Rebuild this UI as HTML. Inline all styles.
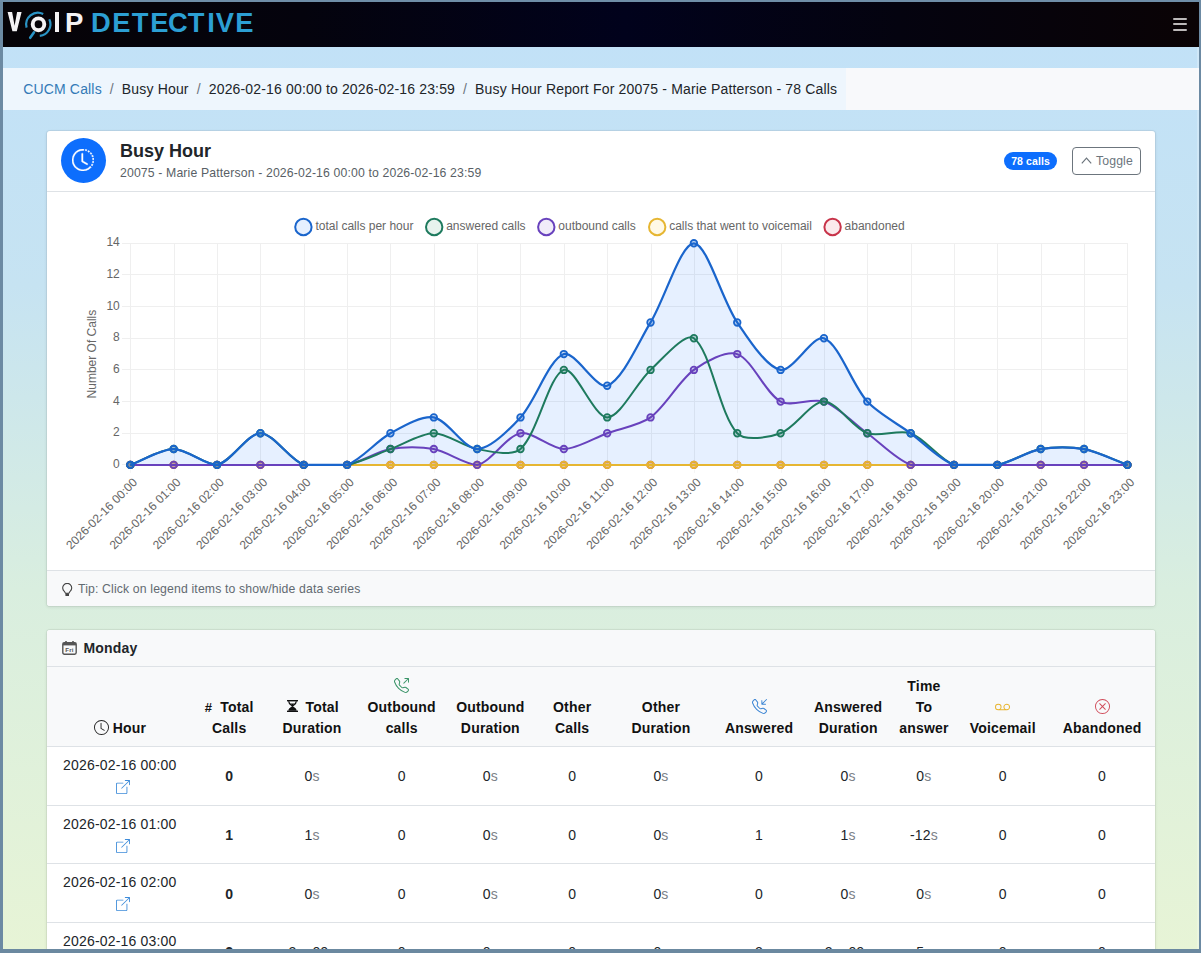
<!DOCTYPE html>
<html><head><meta charset="utf-8"><title>Busy Hour</title>
<style>
*{box-sizing:border-box}
html,body{margin:0;padding:0}
body{width:1201px;height:953px;position:relative;overflow:hidden;background:#6c8aa3;font-family:"Liberation Sans",sans-serif;color:#212529}
.abs{position:absolute}
#vp{left:3px;top:2px;width:1196px;height:947px;background:linear-gradient(180deg,#c1e1f8 0%,#c6e3f2 30%,#d9eedf 62%,#e7f4d6 100%);overflow:hidden}
#nav{left:3px;top:2px;width:1196px;height:45px;background:linear-gradient(90deg,#060307 0%,#04030d 25%,#01021c 52%,#04030f 75%,#0a0305 100%)}
#logo{left:0;top:0}
.lg{position:absolute;font-weight:700;font-size:27.5px;line-height:27px;top:6.5px;color:#f4f2f4}
.det{color:#2c9fd4;font-size:27.3px}
.bl{left:1170.3px;width:13.5px;height:2px;background:#bcb9b9;border-radius:1px}
#bc{left:3px;top:68px;width:1196px;height:42px;background:#f8f9fb}
#bcin{left:3px;top:68px;width:843px;height:42px;background:#eef6fd;font-size:14px;letter-spacing:0.16px;line-height:43px;padding-left:20.2px;white-space:nowrap}
#bcin a{color:#337ab7;text-decoration:none}
#bcin .sep{color:#6c757d;padding:0 8px}
.card{position:absolute;left:46px;width:1110px;background:#fff;border:1px solid rgba(0,0,0,0.05);background-clip:padding-box;border-radius:4px;box-shadow:0 1px 3px rgba(0,0,0,.06);overflow:hidden}
#c1{top:130px;height:477px}
#c1h{left:0;top:0;width:1108px;height:61px;border-bottom:1px solid #dee2e6}
#ic{left:13.5px;top:6.5px;width:45px;height:45px;border-radius:50%;background:#0d6efd}
#t1{left:73px;top:10px;font-size:18px;font-weight:700;line-height:20px;color:#212529}
#t2{left:73px;top:33.8px;font-size:12.25px;letter-spacing:0.14px;color:#595f66;line-height:16px;white-space:nowrap}
#badge{left:957px;top:21px;width:53px;height:18px;border-radius:9px;background:#0d6efd;color:#fff;font-size:10.5px;font-weight:700;line-height:18px;text-align:center;letter-spacing:0.1px}
#tog{left:1025px;top:15.6px;width:69px;height:28px;border:1px solid #6c757d;border-radius:4px;color:#6c757d;font-size:12.25px;line-height:26px;padding-left:23px;letter-spacing:0.14px}
#tog svg{position:absolute;left:8px;top:9px}
#c1f{left:0;top:439px;width:1108px;height:37px;background:#f8f9fa;border-top:1px solid #dee2e6;font-size:12.25px;color:#626a71;letter-spacing:0.14px;line-height:36px;padding-left:31px}
#c1f svg{position:absolute;left:14.8px;top:11.5px}
.chart{position:absolute;left:0;top:0}
#c2{top:629px;height:400px;border-bottom:none}
#c2h{left:0;top:0;width:1108px;height:37px;background:#f8f9fa;border-bottom:1px solid #dee2e6;font-weight:700;font-size:14px;letter-spacing:0.18px;line-height:36px;padding-left:36.5px}
#c2h svg{position:absolute;left:14.5px;top:11px}
table{position:absolute;left:0;top:37px;width:1108px;border-collapse:collapse;table-layout:fixed;font-size:14px;letter-spacing:0.18px}
th{background:#f8f9fa;font-weight:700;vertical-align:bottom;padding:9px 2px 7px;line-height:21px;text-align:center;border-bottom:1px solid #dee2e6;color:#111}
th svg{vertical-align:-2px}
td{text-align:center;vertical-align:middle;padding:9px 2px 7px;line-height:20.85px;border-bottom:1px solid #dee2e6;color:#212529}
td.hr{padding:8px 2px}
td b{font-weight:700}
.sfx{color:#7c8288}
.ext svg{vertical-align:-3px}
</style></head><body>
<div id="vp" class="abs"></div>
<div id="nav" class="abs">
  <svg class="abs" style="left:0;top:0" width="30" height="45" viewBox="0 0 30 45"><polygon points="4.6,10 9.1,10 11.6,23.8 14.1,10 18.6,10 13.8,29.2 9.4,29.2" fill="#f4f2f4"/></svg>
  <svg class="abs" style="left:0;top:0" width="70" height="45" viewBox="0 0 70 45">
    <ellipse cx="35.5" cy="22.3" rx="5.8" ry="5.9" fill="none" stroke="#f4f2f4" stroke-width="3.9"/>
    <path d="M40.2 11.9 A11.8 11.8 0 0 0 23.6 25.6" fill="none" stroke="#2a93c4" stroke-width="2.2"/>
    <path d="M46.3 17.2 A11.8 11.8 0 0 1 36.8 33.9" fill="none" stroke="#2a93c4" stroke-width="2.2"/>
    <path d="M30.9 30.4 L27.2 35.8" fill="none" stroke="#2a93c4" stroke-width="2.6" stroke-linecap="round"/>
  </svg>
  <div class="abs" style="left:52px;top:10px;width:3.8px;height:19.5px;background:#f4f2f4"></div>
  <div class="lg" style="left:62px">P</div>
  <div class="lg det" style="left:88.0px">D</div><div class="lg det" style="left:109.2px">E</div><div class="lg det" style="left:128.7px">T</div><div class="lg det" style="left:147.2px">E</div><div class="lg det" style="left:164.9px">C</div><div class="lg det" style="left:184.7px">T</div><div class="lg det" style="left:204.2px">I</div><div class="lg det" style="left:212.8px">V</div><div class="lg det" style="left:232.2px">E</div>
  <div class="abs bl" style="top:15.9px"></div><div class="abs bl" style="top:21.4px"></div><div class="abs bl" style="top:26.9px"></div>
</div>
<div id="bc" class="abs"></div>
<div id="bcin" class="abs"><a>CUCM Calls</a><span class="sep">/</span>Busy Hour<span class="sep">/</span>2026-02-16 00:00 to 2026-02-16 23:59<span class="sep">/</span>Busy Hour Report For 20075 - Marie Patterson - 78 Calls</div>

<div id="c1" class="card">
  <div id="c1h" class="abs">
    <div id="ic" class="abs">
      <svg class="abs" style="left:11.5px;top:11.5px" width="22" height="22" viewBox="0 0 16 16" fill="#fff" stroke="#fff" stroke-width="0.3"><path d="M8.515 1.019A7 7 0 0 0 8 1V0a8 8 0 0 1 .589.022zm2.004.45a7 7 0 0 0-.985-.299l.219-.976q.576.129 1.126.342zm1.37.71a7 7 0 0 0-.439-.27l.493-.87a8 8 0 0 1 .979.654l-.615.789a7 7 0 0 0-.418-.302zm1.834 1.79a7 7 0 0 0-.653-.796l.724-.69q.406.429.747.91zm.744 1.352a7 7 0 0 0-.214-.468l.893-.45a8 8 0 0 1 .45 1.088l-.95.313a7 7 0 0 0-.179-.483m.53 2.507a7 7 0 0 0-.1-1.025l.985-.17q.1.58.116 1.17zm-.131 1.538q.05-.254.081-.51l.993.123a8 8 0 0 1-.23 1.155l-.964-.267q.069-.247.12-.501m-.952 2.379q.276-.436.486-.908l.914.405q-.24.54-.555 1.038zm-.964 1.205q.183-.183.35-.378l.758.653a8 8 0 0 1-.401.432z"/><path d="M8 1a7 7 0 1 0 4.95 11.95l.707.707A8.001 8.001 0 1 1 8 0z"/><path d="M7.5 3a.5.5 0 0 1 .5.5v5.21l3.248 1.856a.5.5 0 0 1-.496.868l-3.5-2A.5.5 0 0 1 7 9V3.5a.5.5 0 0 1 .5-.5"/></svg>
    </div>
    <div id="t1" class="abs">Busy Hour</div>
    <div id="t2" class="abs">20075 - Marie Patterson - 2026-02-16 00:00 to 2026-02-16 23:59</div>
    <div id="badge" class="abs">78 calls</div>
    <div id="tog" class="abs"><svg width="11" height="7" viewBox="0 0 11 7"><path d="M0.8 6.3 L5.5 1.2 L10.2 6.3" fill="none" stroke="#6c757d" stroke-width="1.2"/></svg>Toggle</div>
  </div>
  <div id="c1f" class="abs"><svg width="11" height="14" viewBox="0 0 11 14"><path d="M3.5 10.3 L2.3 8.3 A4.5 4.5 0 1 1 8.1 8.3 L6.9 10.3 Z" fill="none" stroke="#444" stroke-width="1.1" stroke-linejoin="round"/><rect x="3.4" y="10.2" width="3.6" height="2.8" rx="0.6" fill="#444"/></svg>Tip: Click on legend items to show/hide data series</div>
</div>

<div id="c2" class="card">
  <div id="c2h" class="abs"><svg width="15" height="14" viewBox="0 0 15 14"><rect x="0.8" y="1.8" width="13.4" height="11.4" rx="1.6" fill="none" stroke="#555" stroke-width="1.4"/><rect x="0.8" y="1.8" width="13.4" height="2.6" fill="#555"/><rect x="3.2" y="0" width="1.6" height="2.5" fill="#555"/><rect x="10.2" y="0" width="1.6" height="2.5" fill="#555"/><text x="7.5" y="10.8" font-family="Liberation Sans" font-size="6.2" font-weight="700" fill="#555" text-anchor="middle">Fri</text></svg>Monday</div>
  <table>
    <colgroup><col style="width:145.6px"><col style="width:73.2px"><col style="width:92.6px"><col style="width:86.6px"><col style="width:90.8px"><col style="width:72.8px"><col style="width:104.8px"><col style="width:91.4px"><col style="width:86.8px"><col style="width:64.8px"><col style="width:92.8px"><col style="width:105.8px"></colgroup>
    <thead><tr>
      <th><svg width="15" height="15" viewBox="0 0 16 16" fill="#222"><path d="M8 3.5a.5.5 0 0 0-1 0V9a.5.5 0 0 0 .252.434l3.5 2a.5.5 0 0 0 .496-.868L8 8.71z"/><path d="M8 16A8 8 0 1 0 8 0a8 8 0 0 0 0 16m7-8A7 7 0 1 1 1 8a7 7 0 0 1 14 0"/></svg> Hour</th>
      <th><span style="font-size:13px">#</span>&nbsp; Total<br>Calls</th>
      <th><svg width="11" height="12" viewBox="0 0 11 12" style="margin-left:2px;margin-right:3px;vertical-align:0px"><rect x="0" y="0" width="11" height="1.4" fill="#111"/><rect x="0" y="10.6" width="11" height="1.4" fill="#111"/><path d="M1.7 1.3 C1.7 4 4.6 5 5.5 6 C6.4 5 9.3 4 9.3 1.3" fill="none" stroke="#111" stroke-width="1.3"/><path d="M3.6 3.6 H7.4 C6.8 4.4 5.9 4.9 5.5 5.4 C5.1 4.9 4.2 4.4 3.6 3.6 Z" fill="#111"/><path d="M1.4 10.7 C1.4 8 4.5 7 5.5 6 C6.5 7 9.6 8 9.6 10.7 Z" fill="#111"/></svg> Total<br>Duration</th>
      <th><svg width="15" height="15" viewBox="0 0 16 16" fill="#3a9468"><path d="M3.654 1.328a.678.678 0 0 0-1.015-.063L1.605 2.3c-.483.484-.661 1.169-.45 1.77a17.6 17.6 0 0 0 4.168 6.608 17.6 17.6 0 0 0 6.608 4.168c.601.211 1.286.033 1.77-.45l1.034-1.034a.678.678 0 0 0-.063-1.015l-2.307-1.794a.68.68 0 0 0-.58-.122l-2.19.547a1.75 1.75 0 0 1-1.657-.459L5.482 8.062a1.75 1.75 0 0 1-.46-1.657l.548-2.19a.68.68 0 0 0-.122-.58zM1.884.511a1.745 1.745 0 0 1 2.612.163L6.29 2.98c.329.423.445.974.315 1.494l-.547 2.19a.68.68 0 0 0 .178.643l2.457 2.457a.68.68 0 0 0 .644.178l2.189-.547a1.75 1.75 0 0 1 1.494.315l2.306 1.794c.829.645.905 1.87.163 2.611l-1.034 1.034c-.74.74-1.846 1.065-2.877.702a18.6 18.6 0 0 1-7.01-4.42 18.6 18.6 0 0 1-4.42-7.009c-.362-1.03-.037-2.137.703-2.877zM11 .5a.5.5 0 0 1 .5-.5h4a.5.5 0 0 1 .5.5v4a.5.5 0 0 1-1 0V1.707l-4.146 4.147a.5.5 0 0 1-.708-.708L14.293 1H11.5a.5.5 0 0 1-.5-.5"/></svg><br>Outbound<br>calls</th>
      <th>Outbound<br>Duration</th>
      <th>Other<br>Calls</th>
      <th>Other<br>Duration</th>
      <th><svg width="15" height="15" viewBox="0 0 16 16" fill="#3d86d4"><path d="M3.654 1.328a.678.678 0 0 0-1.015-.063L1.605 2.3c-.483.484-.661 1.169-.45 1.77a17.6 17.6 0 0 0 4.168 6.608 17.6 17.6 0 0 0 6.608 4.168c.601.211 1.286.033 1.77-.45l1.034-1.034a.678.678 0 0 0-.063-1.015l-2.307-1.794a.68.68 0 0 0-.58-.122l-2.19.547a1.75 1.75 0 0 1-1.657-.459L5.482 8.062a1.75 1.75 0 0 1-.46-1.657l.548-2.19a.68.68 0 0 0-.122-.58zM1.884.511a1.745 1.745 0 0 1 2.612.163L6.29 2.98c.329.423.445.974.315 1.494l-.547 2.19a.68.68 0 0 0 .178.643l2.457 2.457a.68.68 0 0 0 .644.178l2.189-.547a1.75 1.75 0 0 1 1.494.315l2.306 1.794c.829.645.905 1.87.163 2.611l-1.034 1.034c-.74.74-1.846 1.065-2.877.702a18.6 18.6 0 0 1-7.01-4.42 18.6 18.6 0 0 1-4.42-7.009c-.362-1.03-.037-2.137.703-2.877zM15.854.146a.5.5 0 0 1 0 .708L11.707 5H14.5a.5.5 0 0 1 0 1h-4a.5.5 0 0 1-.5-.5v-4a.5.5 0 0 1 1 0v2.793L15.146.146a.5.5 0 0 1 .708 0"/></svg><br>Answered</th>
      <th>Answered<br>Duration</th>
      <th>Time<br>To<br>answer</th>
      <th><svg width="15" height="15" viewBox="0 0 16 16" fill="#e8b530"><path d="M7 8.5A3.5 3.5 0 0 1 5.959 11H10.04A3.5 3.5 0 1 1 12.5 12h-9a3.5 3.5 0 1 1 3.5-3.5m-6 0a2.5 2.5 0 1 0 5 0 2.5 2.5 0 0 0-5 0m14 0a2.5 2.5 0 1 0-5 0 2.5 2.5 0 0 0 5 0"/></svg><br>Voicemail</th>
      <th><svg width="15" height="15" viewBox="0 0 16 16" fill="#d04a58"><path d="M8 15A7 7 0 1 1 8 1a7 7 0 0 1 0 14m0 1A8 8 0 1 0 8 0a8 8 0 0 0 0 16"/><path d="M4.646 4.646a.5.5 0 0 1 .708 0L8 7.293l2.646-2.647a.5.5 0 0 1 .708.708L8.707 8l2.647 2.646a.5.5 0 0 1-.708.708L8 8.707l-2.646 2.647a.5.5 0 0 1-.708-.708L7.293 8 4.646 5.354a.5.5 0 0 1 0-.708"/></svg><br>Abandoned</th>
    </tr></thead>
    <tbody>
<tr><td class="hr">2026-02-16 00:00<br><span class="ext"><svg width="14" height="14" viewBox="0 0 16 16" style="margin-left:7px"><path d="M8.636 3.5a.5.5 0 0 0-.5-.5H1.5A1.5 1.5 0 0 0 0 4.5v10A1.5 1.5 0 0 0 1.5 16h10a1.5 1.5 0 0 0 1.5-1.5V7.864a.5.5 0 0 0-1 0V14.5a.5.5 0 0 1-.5.5h-10a.5.5 0 0 1-.5-.5v-10a.5.5 0 0 1 .5-.5h6.636a.5.5 0 0 0 .5-.5z" fill="#3d8bd9"/><path d="M16 .5a.5.5 0 0 0-.5-.5h-5a.5.5 0 0 0 0 1h3.793L6.146 9.146a.5.5 0 1 0 .708.708L15 1.707V5.5a.5.5 0 0 0 1 0v-5z" fill="#3d8bd9"/></svg></span></td><td><b>0</b></td><td>0<span class="sfx">s</span></td><td>0</td><td>0<span class="sfx">s</span></td><td>0</td><td>0<span class="sfx">s</span></td><td>0</td><td>0<span class="sfx">s</span></td><td>0<span class="sfx">s</span></td><td>0</td><td>0</td></tr>
<tr><td class="hr">2026-02-16 01:00<br><span class="ext"><svg width="14" height="14" viewBox="0 0 16 16" style="margin-left:7px"><path d="M8.636 3.5a.5.5 0 0 0-.5-.5H1.5A1.5 1.5 0 0 0 0 4.5v10A1.5 1.5 0 0 0 1.5 16h10a1.5 1.5 0 0 0 1.5-1.5V7.864a.5.5 0 0 0-1 0V14.5a.5.5 0 0 1-.5.5h-10a.5.5 0 0 1-.5-.5v-10a.5.5 0 0 1 .5-.5h6.636a.5.5 0 0 0 .5-.5z" fill="#3d8bd9"/><path d="M16 .5a.5.5 0 0 0-.5-.5h-5a.5.5 0 0 0 0 1h3.793L6.146 9.146a.5.5 0 1 0 .708.708L15 1.707V5.5a.5.5 0 0 0 1 0v-5z" fill="#3d8bd9"/></svg></span></td><td><b>1</b></td><td>1<span class="sfx">s</span></td><td>0</td><td>0<span class="sfx">s</span></td><td>0</td><td>0<span class="sfx">s</span></td><td>1</td><td>1<span class="sfx">s</span></td><td>-12<span class="sfx">s</span></td><td>0</td><td>0</td></tr>
<tr><td class="hr">2026-02-16 02:00<br><span class="ext"><svg width="14" height="14" viewBox="0 0 16 16" style="margin-left:7px"><path d="M8.636 3.5a.5.5 0 0 0-.5-.5H1.5A1.5 1.5 0 0 0 0 4.5v10A1.5 1.5 0 0 0 1.5 16h10a1.5 1.5 0 0 0 1.5-1.5V7.864a.5.5 0 0 0-1 0V14.5a.5.5 0 0 1-.5.5h-10a.5.5 0 0 1-.5-.5v-10a.5.5 0 0 1 .5-.5h6.636a.5.5 0 0 0 .5-.5z" fill="#3d8bd9"/><path d="M16 .5a.5.5 0 0 0-.5-.5h-5a.5.5 0 0 0 0 1h3.793L6.146 9.146a.5.5 0 1 0 .708.708L15 1.707V5.5a.5.5 0 0 0 1 0v-5z" fill="#3d8bd9"/></svg></span></td><td><b>0</b></td><td>0<span class="sfx">s</span></td><td>0</td><td>0<span class="sfx">s</span></td><td>0</td><td>0<span class="sfx">s</span></td><td>0</td><td>0<span class="sfx">s</span></td><td>0<span class="sfx">s</span></td><td>0</td><td>0</td></tr>
<tr><td class="hr">2026-02-16 03:00<br><span class="ext"><svg width="14" height="14" viewBox="0 0 16 16" style="margin-left:7px"><path d="M8.636 3.5a.5.5 0 0 0-.5-.5H1.5A1.5 1.5 0 0 0 0 4.5v10A1.5 1.5 0 0 0 1.5 16h10a1.5 1.5 0 0 0 1.5-1.5V7.864a.5.5 0 0 0-1 0V14.5a.5.5 0 0 1-.5.5h-10a.5.5 0 0 1-.5-.5v-10a.5.5 0 0 1 .5-.5h6.636a.5.5 0 0 0 .5-.5z" fill="#3d8bd9"/><path d="M16 .5a.5.5 0 0 0-.5-.5h-5a.5.5 0 0 0 0 1h3.793L6.146 9.146a.5.5 0 1 0 .708.708L15 1.707V5.5a.5.5 0 0 0 1 0v-5z" fill="#3d8bd9"/></svg></span></td><td><b>2</b></td><td>2m 09<span class="sfx">s</span></td><td>0</td><td>0<span class="sfx">s</span></td><td>0</td><td>0<span class="sfx">s</span></td><td>2</td><td>2m 09<span class="sfx">s</span></td><td>5<span class="sfx">s</span></td><td>0</td><td>0</td></tr>
    </tbody>
  </table>
</div>
<svg class="chart" width="1201" height="953" viewBox="0 0 1201 953">
<g stroke="#efefef" stroke-width="1"><line x1="122" y1="464.5" x2="1127.9" y2="464.5"/><line x1="122" y1="433.5" x2="1127.9" y2="433.5"/><line x1="122" y1="401.5" x2="1127.9" y2="401.5"/><line x1="122" y1="369.5" x2="1127.9" y2="369.5"/><line x1="122" y1="338.5" x2="1127.9" y2="338.5"/><line x1="122" y1="306.5" x2="1127.9" y2="306.5"/><line x1="122" y1="274.5" x2="1127.9" y2="274.5"/><line x1="122" y1="243.5" x2="1127.9" y2="243.5"/><line x1="130.5" y1="243.3" x2="130.5" y2="464.9"/><line x1="130.5" y1="464.9" x2="130.5" y2="472.9" stroke="#f5f5f5"/><line x1="174.5" y1="243.3" x2="174.5" y2="464.9"/><line x1="174.5" y1="464.9" x2="174.5" y2="472.9" stroke="#f5f5f5"/><line x1="217.5" y1="243.3" x2="217.5" y2="464.9"/><line x1="217.5" y1="464.9" x2="217.5" y2="472.9" stroke="#f5f5f5"/><line x1="260.5" y1="243.3" x2="260.5" y2="464.9"/><line x1="260.5" y1="464.9" x2="260.5" y2="472.9" stroke="#f5f5f5"/><line x1="304.5" y1="243.3" x2="304.5" y2="464.9"/><line x1="304.5" y1="464.9" x2="304.5" y2="472.9" stroke="#f5f5f5"/><line x1="347.5" y1="243.3" x2="347.5" y2="464.9"/><line x1="347.5" y1="464.9" x2="347.5" y2="472.9" stroke="#f5f5f5"/><line x1="390.5" y1="243.3" x2="390.5" y2="464.9"/><line x1="390.5" y1="464.9" x2="390.5" y2="472.9" stroke="#f5f5f5"/><line x1="434.5" y1="243.3" x2="434.5" y2="464.9"/><line x1="434.5" y1="464.9" x2="434.5" y2="472.9" stroke="#f5f5f5"/><line x1="477.5" y1="243.3" x2="477.5" y2="464.9"/><line x1="477.5" y1="464.9" x2="477.5" y2="472.9" stroke="#f5f5f5"/><line x1="520.5" y1="243.3" x2="520.5" y2="464.9"/><line x1="520.5" y1="464.9" x2="520.5" y2="472.9" stroke="#f5f5f5"/><line x1="564.5" y1="243.3" x2="564.5" y2="464.9"/><line x1="564.5" y1="464.9" x2="564.5" y2="472.9" stroke="#f5f5f5"/><line x1="607.5" y1="243.3" x2="607.5" y2="464.9"/><line x1="607.5" y1="464.9" x2="607.5" y2="472.9" stroke="#f5f5f5"/><line x1="651.5" y1="243.3" x2="651.5" y2="464.9"/><line x1="651.5" y1="464.9" x2="651.5" y2="472.9" stroke="#f5f5f5"/><line x1="694.5" y1="243.3" x2="694.5" y2="464.9"/><line x1="694.5" y1="464.9" x2="694.5" y2="472.9" stroke="#f5f5f5"/><line x1="737.5" y1="243.3" x2="737.5" y2="464.9"/><line x1="737.5" y1="464.9" x2="737.5" y2="472.9" stroke="#f5f5f5"/><line x1="781.5" y1="243.3" x2="781.5" y2="464.9"/><line x1="781.5" y1="464.9" x2="781.5" y2="472.9" stroke="#f5f5f5"/><line x1="824.5" y1="243.3" x2="824.5" y2="464.9"/><line x1="824.5" y1="464.9" x2="824.5" y2="472.9" stroke="#f5f5f5"/><line x1="867.5" y1="243.3" x2="867.5" y2="464.9"/><line x1="867.5" y1="464.9" x2="867.5" y2="472.9" stroke="#f5f5f5"/><line x1="911.5" y1="243.3" x2="911.5" y2="464.9"/><line x1="911.5" y1="464.9" x2="911.5" y2="472.9" stroke="#f5f5f5"/><line x1="954.5" y1="243.3" x2="954.5" y2="464.9"/><line x1="954.5" y1="464.9" x2="954.5" y2="472.9" stroke="#f5f5f5"/><line x1="997.5" y1="243.3" x2="997.5" y2="464.9"/><line x1="997.5" y1="464.9" x2="997.5" y2="472.9" stroke="#f5f5f5"/><line x1="1041.5" y1="243.3" x2="1041.5" y2="464.9"/><line x1="1041.5" y1="464.9" x2="1041.5" y2="472.9" stroke="#f5f5f5"/><line x1="1084.5" y1="243.3" x2="1084.5" y2="464.9"/><line x1="1084.5" y1="464.9" x2="1084.5" y2="472.9" stroke="#f5f5f5"/><line x1="1127.5" y1="243.3" x2="1127.5" y2="464.9"/><line x1="1127.5" y1="464.9" x2="1127.5" y2="472.9" stroke="#f5f5f5"/></g>
<g font-family="Liberation Sans" font-size="12" fill="#666" text-anchor="end"><text x="119.8" y="468.0">0</text><text x="119.8" y="436.3">2</text><text x="119.8" y="404.7">4</text><text x="119.8" y="373.0">6</text><text x="119.8" y="341.4">8</text><text x="119.8" y="309.7">10</text><text x="119.8" y="278.0">12</text><text x="119.8" y="246.4">14</text></g>
<text transform="translate(96,354.1) rotate(-90)" font-family="Liberation Sans" font-size="12" fill="#666" text-anchor="middle">Number Of Calls</text>
<g font-family="Liberation Sans" font-size="12" fill="#666" text-anchor="end"><text transform="translate(130.34,475.4) rotate(-45)" x="0" y="10.9">2026-02-16 00:00</text><text transform="translate(173.69,475.4) rotate(-45)" x="0" y="10.9">2026-02-16 01:00</text><text transform="translate(217.04,475.4) rotate(-45)" x="0" y="10.9">2026-02-16 02:00</text><text transform="translate(260.39,475.4) rotate(-45)" x="0" y="10.9">2026-02-16 03:00</text><text transform="translate(303.74,475.4) rotate(-45)" x="0" y="10.9">2026-02-16 04:00</text><text transform="translate(347.09,475.4) rotate(-45)" x="0" y="10.9">2026-02-16 05:00</text><text transform="translate(390.44,475.4) rotate(-45)" x="0" y="10.9">2026-02-16 06:00</text><text transform="translate(433.79,475.4) rotate(-45)" x="0" y="10.9">2026-02-16 07:00</text><text transform="translate(477.14,475.4) rotate(-45)" x="0" y="10.9">2026-02-16 08:00</text><text transform="translate(520.49,475.4) rotate(-45)" x="0" y="10.9">2026-02-16 09:00</text><text transform="translate(563.84,475.4) rotate(-45)" x="0" y="10.9">2026-02-16 10:00</text><text transform="translate(607.19,475.4) rotate(-45)" x="0" y="10.9">2026-02-16 11:00</text><text transform="translate(650.54,475.4) rotate(-45)" x="0" y="10.9">2026-02-16 12:00</text><text transform="translate(693.89,475.4) rotate(-45)" x="0" y="10.9">2026-02-16 13:00</text><text transform="translate(737.24,475.4) rotate(-45)" x="0" y="10.9">2026-02-16 14:00</text><text transform="translate(780.59,475.4) rotate(-45)" x="0" y="10.9">2026-02-16 15:00</text><text transform="translate(823.94,475.4) rotate(-45)" x="0" y="10.9">2026-02-16 16:00</text><text transform="translate(867.29,475.4) rotate(-45)" x="0" y="10.9">2026-02-16 17:00</text><text transform="translate(910.64,475.4) rotate(-45)" x="0" y="10.9">2026-02-16 18:00</text><text transform="translate(953.99,475.4) rotate(-45)" x="0" y="10.9">2026-02-16 19:00</text><text transform="translate(997.34,475.4) rotate(-45)" x="0" y="10.9">2026-02-16 20:00</text><text transform="translate(1040.69,475.4) rotate(-45)" x="0" y="10.9">2026-02-16 21:00</text><text transform="translate(1084.04,475.4) rotate(-45)" x="0" y="10.9">2026-02-16 22:00</text><text transform="translate(1127.39,475.4) rotate(-45)" x="0" y="10.9">2026-02-16 23:00</text></g>
<path d="M130.34,464.90 C143.34,460.15 160.69,449.07 173.69,449.07 C186.69,449.07 205.02,464.90 217.04,464.90 C231.03,462.35 247.38,433.24 260.39,433.24 C273.39,433.24 289.35,459.65 303.74,464.90 C315.36,464.90 335.47,464.90 347.09,464.90 C361.48,459.65 376.45,440.90 390.44,433.24 C402.46,426.65 421.77,415.21 433.79,417.41 C447.78,419.96 464.13,449.07 477.14,449.07 C490.14,449.07 509.78,429.14 520.49,417.41 C535.79,400.64 548.54,359.68 563.84,354.09 C574.55,350.18 596.48,389.66 607.19,385.75 C622.49,380.16 638.59,342.07 650.54,322.43 C664.60,299.33 680.89,243.28 693.89,243.28 C706.90,243.28 722.05,300.25 737.24,322.43 C748.06,338.24 766.41,367.33 780.59,369.92 C792.42,372.08 813.23,334.35 823.94,338.26 C839.24,343.85 851.99,384.81 867.29,401.58 C878.00,413.31 897.64,423.74 910.64,433.24 C923.65,442.74 939.60,459.65 953.99,464.90 C965.61,464.90 984.74,464.90 997.34,464.90 C1010.75,462.45 1027.28,451.52 1040.69,449.07 C1053.29,446.77 1071.44,446.77 1084.04,449.07 C1097.45,451.52 1114.38,460.15 1127.39,464.90 L1127.39,464.90 L130.34,464.90 Z" fill="rgba(13,110,253,0.10)" stroke="none"/>
<path d="M130.34,464.90 C143.34,464.90 160.69,464.90 173.69,464.90 C186.69,464.90 204.04,464.90 217.04,464.90 C230.05,464.90 247.38,464.90 260.39,464.90 C273.39,464.90 290.74,464.90 303.74,464.90 C316.75,464.90 334.09,464.90 347.09,464.90 C360.10,464.90 377.44,464.90 390.44,464.90 C403.45,464.90 420.78,464.90 433.79,464.90 C446.79,464.90 464.13,464.90 477.14,464.90 C490.14,464.90 507.49,464.90 520.49,464.90 C533.50,464.90 550.84,464.90 563.84,464.90 C576.85,464.90 594.19,464.90 607.19,464.90 C620.20,464.90 637.54,464.90 650.54,464.90 C663.55,464.90 680.89,464.90 693.89,464.90 C706.90,464.90 724.24,464.90 737.24,464.90 C750.25,464.90 767.59,464.90 780.59,464.90 C793.60,464.90 810.94,464.90 823.94,464.90 C836.95,464.90 854.29,464.90 867.29,464.90 C880.30,464.90 897.64,464.90 910.64,464.90 C923.65,464.90 940.99,464.90 953.99,464.90 C967.00,464.90 984.34,464.90 997.34,464.90 C1010.35,464.90 1027.68,464.90 1040.69,464.90 C1053.69,464.90 1071.04,464.90 1084.04,464.90 C1097.05,464.90 1114.38,464.90 1127.39,464.90" fill="none" stroke="#c8344a" stroke-width="2" stroke-linejoin="round"/><g fill="rgba(200,52,74,0.25)" stroke="#c8344a" stroke-width="1.8"><circle cx="130.34" cy="464.90" r="3.3"/><circle cx="173.69" cy="464.90" r="3.3"/><circle cx="217.04" cy="464.90" r="3.3"/><circle cx="260.39" cy="464.90" r="3.3"/><circle cx="303.74" cy="464.90" r="3.3"/><circle cx="347.09" cy="464.90" r="3.3"/><circle cx="390.44" cy="464.90" r="3.3"/><circle cx="433.79" cy="464.90" r="3.3"/><circle cx="477.14" cy="464.90" r="3.3"/><circle cx="520.49" cy="464.90" r="3.3"/><circle cx="563.84" cy="464.90" r="3.3"/><circle cx="607.19" cy="464.90" r="3.3"/><circle cx="650.54" cy="464.90" r="3.3"/><circle cx="693.89" cy="464.90" r="3.3"/><circle cx="737.24" cy="464.90" r="3.3"/><circle cx="780.59" cy="464.90" r="3.3"/><circle cx="823.94" cy="464.90" r="3.3"/><circle cx="867.29" cy="464.90" r="3.3"/><circle cx="910.64" cy="464.90" r="3.3"/><circle cx="953.99" cy="464.90" r="3.3"/><circle cx="997.34" cy="464.90" r="3.3"/><circle cx="1040.69" cy="464.90" r="3.3"/><circle cx="1084.04" cy="464.90" r="3.3"/><circle cx="1127.39" cy="464.90" r="3.3"/></g>
<path d="M130.34,464.90 C143.34,464.90 160.69,464.90 173.69,464.90 C186.69,464.90 204.04,464.90 217.04,464.90 C230.05,464.90 247.38,464.90 260.39,464.90 C273.39,464.90 290.74,464.90 303.74,464.90 C316.75,464.90 334.09,464.90 347.09,464.90 C360.10,464.90 377.44,464.90 390.44,464.90 C403.45,464.90 420.78,464.90 433.79,464.90 C446.79,464.90 464.13,464.90 477.14,464.90 C490.14,464.90 507.49,464.90 520.49,464.90 C533.50,464.90 550.84,464.90 563.84,464.90 C576.85,464.90 594.19,464.90 607.19,464.90 C620.20,464.90 637.54,464.90 650.54,464.90 C663.55,464.90 680.89,464.90 693.89,464.90 C706.90,464.90 724.24,464.90 737.24,464.90 C750.25,464.90 767.59,464.90 780.59,464.90 C793.60,464.90 810.94,464.90 823.94,464.90 C836.95,464.90 854.29,464.90 867.29,464.90 C880.30,464.90 897.64,464.90 910.64,464.90 C923.65,464.90 940.99,464.90 953.99,464.90 C967.00,464.90 984.34,464.90 997.34,464.90 C1010.35,464.90 1027.68,464.90 1040.69,464.90 C1053.69,464.90 1071.04,464.90 1084.04,464.90 C1097.05,464.90 1114.38,464.90 1127.39,464.90" fill="none" stroke="#e6b632" stroke-width="2" stroke-linejoin="round"/><g fill="rgba(233,181,38,0.3)" stroke="#e6b632" stroke-width="1.8"><circle cx="130.34" cy="464.90" r="3.3"/><circle cx="173.69" cy="464.90" r="3.3"/><circle cx="217.04" cy="464.90" r="3.3"/><circle cx="260.39" cy="464.90" r="3.3"/><circle cx="303.74" cy="464.90" r="3.3"/><circle cx="347.09" cy="464.90" r="3.3"/><circle cx="390.44" cy="464.90" r="3.3"/><circle cx="433.79" cy="464.90" r="3.3"/><circle cx="477.14" cy="464.90" r="3.3"/><circle cx="520.49" cy="464.90" r="3.3"/><circle cx="563.84" cy="464.90" r="3.3"/><circle cx="607.19" cy="464.90" r="3.3"/><circle cx="650.54" cy="464.90" r="3.3"/><circle cx="693.89" cy="464.90" r="3.3"/><circle cx="737.24" cy="464.90" r="3.3"/><circle cx="780.59" cy="464.90" r="3.3"/><circle cx="823.94" cy="464.90" r="3.3"/><circle cx="867.29" cy="464.90" r="3.3"/><circle cx="910.64" cy="464.90" r="3.3"/><circle cx="953.99" cy="464.90" r="3.3"/><circle cx="997.34" cy="464.90" r="3.3"/><circle cx="1040.69" cy="464.90" r="3.3"/><circle cx="1084.04" cy="464.90" r="3.3"/><circle cx="1127.39" cy="464.90" r="3.3"/></g>
<path d="M130.34,464.90 C143.34,464.90 160.69,464.90 173.69,464.90 C186.69,464.90 204.04,464.90 217.04,464.90 C230.05,464.90 247.38,464.90 260.39,464.90 C273.39,464.90 290.74,464.90 303.74,464.90 C316.75,464.90 334.49,464.90 347.09,464.90 C360.50,462.45 377.03,451.52 390.44,449.07 C403.04,446.77 421.19,446.77 433.79,449.07 C447.20,451.52 465.12,464.90 477.14,464.90 C491.13,462.35 506.50,435.79 520.49,433.24 C532.51,431.04 550.84,449.07 563.84,449.07 C576.85,449.07 594.19,437.99 607.19,433.24 C620.20,428.49 639.67,425.35 650.54,417.41 C665.68,406.35 678.75,380.98 693.89,369.92 C704.76,361.98 726.37,350.12 737.24,354.09 C752.38,359.62 765.05,393.07 780.59,401.58 C791.06,407.32 812.32,397.34 823.94,401.58 C838.33,406.83 854.29,423.74 867.29,433.24 C880.30,442.74 896.25,459.65 910.64,464.90 C922.26,464.90 940.99,464.90 953.99,464.90 C967.00,464.90 984.34,464.90 997.34,464.90 C1010.35,464.90 1027.68,464.90 1040.69,464.90 C1053.69,464.90 1071.04,464.90 1084.04,464.90 C1097.05,464.90 1114.38,464.90 1127.39,464.90" fill="none" stroke="#6842bd" stroke-width="2" stroke-linejoin="round"/><g fill="rgba(96,65,181,0.25)" stroke="#6842bd" stroke-width="1.8"><circle cx="130.34" cy="464.90" r="3.3"/><circle cx="173.69" cy="464.90" r="3.3"/><circle cx="217.04" cy="464.90" r="3.3"/><circle cx="260.39" cy="464.90" r="3.3"/><circle cx="303.74" cy="464.90" r="3.3"/><circle cx="347.09" cy="464.90" r="3.3"/><circle cx="390.44" cy="449.07" r="3.3"/><circle cx="433.79" cy="449.07" r="3.3"/><circle cx="477.14" cy="464.90" r="3.3"/><circle cx="520.49" cy="433.24" r="3.3"/><circle cx="563.84" cy="449.07" r="3.3"/><circle cx="607.19" cy="433.24" r="3.3"/><circle cx="650.54" cy="417.41" r="3.3"/><circle cx="693.89" cy="369.92" r="3.3"/><circle cx="737.24" cy="354.09" r="3.3"/><circle cx="780.59" cy="401.58" r="3.3"/><circle cx="823.94" cy="401.58" r="3.3"/><circle cx="867.29" cy="433.24" r="3.3"/><circle cx="910.64" cy="464.90" r="3.3"/><circle cx="953.99" cy="464.90" r="3.3"/><circle cx="997.34" cy="464.90" r="3.3"/><circle cx="1040.69" cy="464.90" r="3.3"/><circle cx="1084.04" cy="464.90" r="3.3"/><circle cx="1127.39" cy="464.90" r="3.3"/></g>
<path d="M130.34,464.90 C143.34,460.15 160.69,449.07 173.69,449.07 C186.69,449.07 205.02,464.90 217.04,464.90 C231.03,462.35 247.38,433.24 260.39,433.24 C273.39,433.24 289.35,459.65 303.74,464.90 C315.36,464.90 334.49,464.90 347.09,464.90 C360.50,462.45 377.44,453.82 390.44,449.07 C403.45,444.32 420.78,433.24 433.79,433.24 C446.79,433.24 463.73,446.62 477.14,449.07 C489.74,451.37 512.05,456.78 520.49,449.07 C538.06,433.03 548.65,375.47 563.84,369.92 C574.66,365.97 594.19,417.41 607.19,417.41 C620.20,417.41 636.36,382.86 650.54,369.92 C662.37,359.12 685.06,331.81 693.89,338.26 C711.07,350.81 718.86,413.11 737.24,433.24 C744.87,441.60 768.97,437.48 780.59,433.24 C794.98,427.99 810.94,401.58 823.94,401.58 C836.95,401.58 852.90,427.99 867.29,433.24 C878.91,437.48 899.02,429.00 910.64,433.24 C925.03,438.49 939.60,459.65 953.99,464.90 C965.61,464.90 984.74,464.90 997.34,464.90 C1010.75,462.45 1027.28,451.52 1040.69,449.07 C1053.29,446.77 1071.44,446.77 1084.04,449.07 C1097.45,451.52 1114.38,460.15 1127.39,464.90" fill="none" stroke="#1e7a5e" stroke-width="2" stroke-linejoin="round"/><g fill="rgba(30,122,94,0.25)" stroke="#1e7a5e" stroke-width="1.8"><circle cx="130.34" cy="464.90" r="3.3"/><circle cx="173.69" cy="449.07" r="3.3"/><circle cx="217.04" cy="464.90" r="3.3"/><circle cx="260.39" cy="433.24" r="3.3"/><circle cx="303.74" cy="464.90" r="3.3"/><circle cx="347.09" cy="464.90" r="3.3"/><circle cx="390.44" cy="449.07" r="3.3"/><circle cx="433.79" cy="433.24" r="3.3"/><circle cx="477.14" cy="449.07" r="3.3"/><circle cx="520.49" cy="449.07" r="3.3"/><circle cx="563.84" cy="369.92" r="3.3"/><circle cx="607.19" cy="417.41" r="3.3"/><circle cx="650.54" cy="369.92" r="3.3"/><circle cx="693.89" cy="338.26" r="3.3"/><circle cx="737.24" cy="433.24" r="3.3"/><circle cx="780.59" cy="433.24" r="3.3"/><circle cx="823.94" cy="401.58" r="3.3"/><circle cx="867.29" cy="433.24" r="3.3"/><circle cx="910.64" cy="433.24" r="3.3"/><circle cx="953.99" cy="464.90" r="3.3"/><circle cx="997.34" cy="464.90" r="3.3"/><circle cx="1040.69" cy="449.07" r="3.3"/><circle cx="1084.04" cy="449.07" r="3.3"/><circle cx="1127.39" cy="464.90" r="3.3"/></g>
<path d="M130.34,464.90 C143.34,460.15 160.69,449.07 173.69,449.07 C186.69,449.07 205.02,464.90 217.04,464.90 C231.03,462.35 247.38,433.24 260.39,433.24 C273.39,433.24 289.35,459.65 303.74,464.90 C315.36,464.90 335.47,464.90 347.09,464.90 C361.48,459.65 376.45,440.90 390.44,433.24 C402.46,426.65 421.77,415.21 433.79,417.41 C447.78,419.96 464.13,449.07 477.14,449.07 C490.14,449.07 509.78,429.14 520.49,417.41 C535.79,400.64 548.54,359.68 563.84,354.09 C574.55,350.18 596.48,389.66 607.19,385.75 C622.49,380.16 638.59,342.07 650.54,322.43 C664.60,299.33 680.89,243.28 693.89,243.28 C706.90,243.28 722.05,300.25 737.24,322.43 C748.06,338.24 766.41,367.33 780.59,369.92 C792.42,372.08 813.23,334.35 823.94,338.26 C839.24,343.85 851.99,384.81 867.29,401.58 C878.00,413.31 897.64,423.74 910.64,433.24 C923.65,442.74 939.60,459.65 953.99,464.90 C965.61,464.90 984.74,464.90 997.34,464.90 C1010.75,462.45 1027.28,451.52 1040.69,449.07 C1053.29,446.77 1071.44,446.77 1084.04,449.07 C1097.45,451.52 1114.38,460.15 1127.39,464.90" fill="none" stroke="#1a65cc" stroke-width="2.2" stroke-linejoin="round"/><g fill="rgba(26,106,212,0.25)" stroke="#1a65cc" stroke-width="1.8"><circle cx="130.34" cy="464.90" r="3.3"/><circle cx="173.69" cy="449.07" r="3.3"/><circle cx="217.04" cy="464.90" r="3.3"/><circle cx="260.39" cy="433.24" r="3.3"/><circle cx="303.74" cy="464.90" r="3.3"/><circle cx="347.09" cy="464.90" r="3.3"/><circle cx="390.44" cy="433.24" r="3.3"/><circle cx="433.79" cy="417.41" r="3.3"/><circle cx="477.14" cy="449.07" r="3.3"/><circle cx="520.49" cy="417.41" r="3.3"/><circle cx="563.84" cy="354.09" r="3.3"/><circle cx="607.19" cy="385.75" r="3.3"/><circle cx="650.54" cy="322.43" r="3.3"/><circle cx="693.89" cy="243.28" r="3.3"/><circle cx="737.24" cy="322.43" r="3.3"/><circle cx="780.59" cy="369.92" r="3.3"/><circle cx="823.94" cy="338.26" r="3.3"/><circle cx="867.29" cy="401.58" r="3.3"/><circle cx="910.64" cy="433.24" r="3.3"/><circle cx="953.99" cy="464.90" r="3.3"/><circle cx="997.34" cy="464.90" r="3.3"/><circle cx="1040.69" cy="449.07" r="3.3"/><circle cx="1084.04" cy="449.07" r="3.3"/><circle cx="1127.39" cy="464.90" r="3.3"/></g>
<circle cx="303.4" cy="227" r="8.2" fill="rgba(13,110,253,0.1)" stroke="#1a65cc" stroke-width="2"/>
<text x="315.4" y="229.6" font-family="Liberation Sans" font-size="12" fill="#666">total calls per hour</text>
<circle cx="434.2" cy="227" r="8.2" fill="rgba(25,135,84,0.1)" stroke="#1e7a5e" stroke-width="2"/>
<text x="446.2" y="229.6" font-family="Liberation Sans" font-size="12" fill="#666">answered calls</text>
<circle cx="546.3" cy="227" r="8.2" fill="rgba(111,66,193,0.1)" stroke="#6842bd" stroke-width="2"/>
<text x="558.3" y="229.6" font-family="Liberation Sans" font-size="12" fill="#666">outbound calls</text>
<circle cx="657.2" cy="227" r="8.2" fill="rgba(255,193,7,0.1)" stroke="#e6b632" stroke-width="2"/>
<text x="669.2" y="229.6" font-family="Liberation Sans" font-size="12" fill="#666">calls that went to voicemail</text>
<circle cx="832.6" cy="227" r="8.2" fill="rgba(220,53,69,0.1)" stroke="#c8344a" stroke-width="2"/>
<text x="844.6" y="229.6" font-family="Liberation Sans" font-size="12" fill="#666">abandoned</text>
</svg>
<div class="abs" style="left:1197px;top:47px;width:2px;height:902px;background:rgba(255,255,255,0.22)"></div>
<div class="abs" style="left:0;top:0;width:3px;height:953px;background:#6c8aa3"></div>
<div class="abs" style="left:0;top:0;width:1201px;height:2px;background:#6f8ea8"></div>
<div class="abs" style="left:1199px;top:0;width:2px;height:953px;background:#6c8aa3"></div>
<div class="abs" style="left:0;top:949px;width:1201px;height:4px;background:#6b89a0"></div>
</body></html>
